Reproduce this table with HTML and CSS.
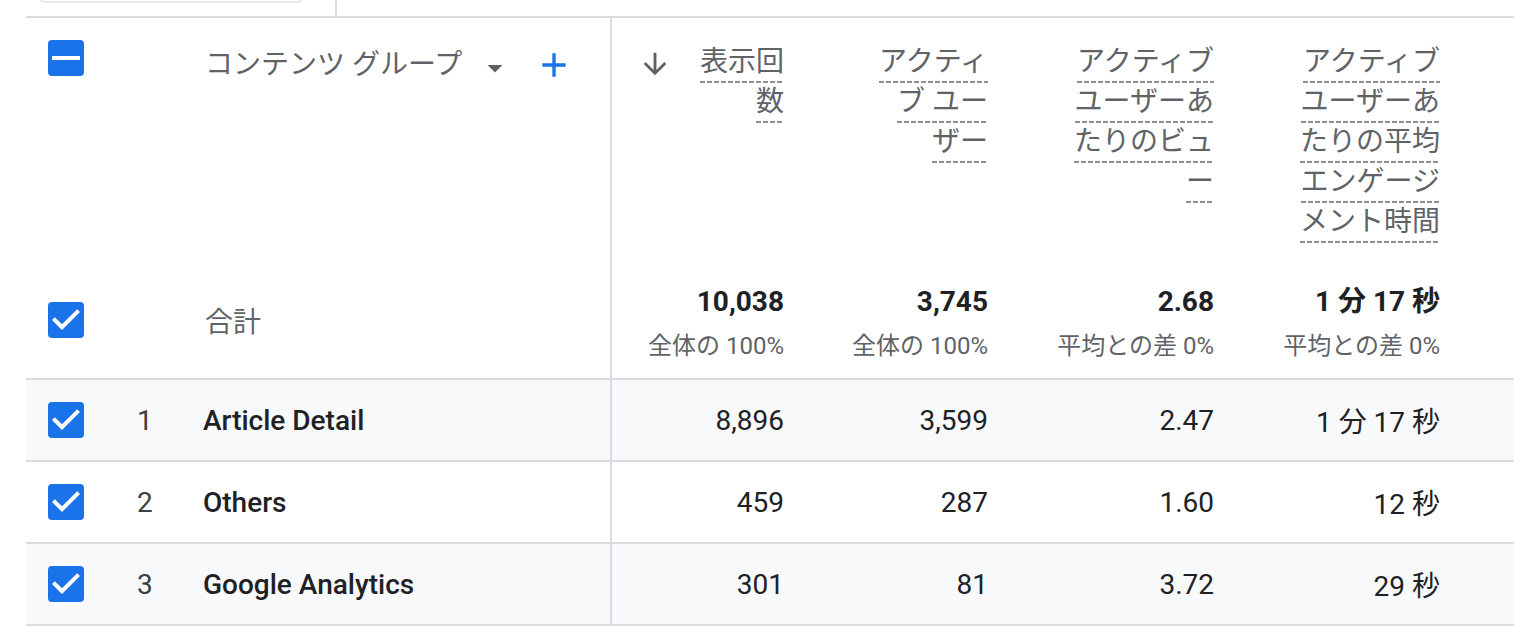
FILE: index.html
```html
<!DOCTYPE html>
<html lang="ja">
<head>
<meta charset="utf-8">
<title>コンテンツ グループ</title>
<link rel="stylesheet" href="styles.css">
</head>
<body>
<div class="topbar">
  <div class="search"></div>
  <div class="tsep"></div>
</div>
<div class="tbl">
  <div class="row head">
    <div class="c lc">
      <svg class="cb" viewBox="0 0 36 36" width="36" height="36"><rect width="36" height="36" rx="4" fill="#1a73e8"/><rect x="4" y="16" width="28" height="4" fill="#fff"/></svg>
      <div class="dim">
        <span class="dimlabel">コンテンツ グループ</span>
        <svg class="drop" viewBox="0 0 24 24" width="36" height="36"><path d="M7 10l5 5 5-5z" fill="#5f6368"/></svg>
        <svg class="plus" viewBox="0 0 24 24" width="40" height="40"><path d="M19 13h-6v6h-2v-6H5v-2h6V5h2v6h6v2z" fill="#1a73e8"/></svg>
      </div>
    </div>
    <div class="c mh">
      <svg class="sort" viewBox="0 0 24 24" width="34" height="34"><path d="M20 12l-1.41-1.41L13 16.17V4h-2v12.17l-5.58-5.59L4 12l8 8 8-8z" fill="#5f6368"/></svg>
      <div class="hls">
        <div class="hl"><span>表示回</span></div>
        <div class="hl"><span>数</span></div>
      </div>
    </div>
    <div class="c mh">
      <div class="hls">
        <div class="hl"><span>アクティ</span></div>
        <div class="hl"><span>ブ ユー</span></div>
        <div class="hl"><span>ザー</span></div>
      </div>
    </div>
    <div class="c mh">
      <div class="hls">
        <div class="hl"><span>アクティブ</span></div>
        <div class="hl"><span>ユーザーあ</span></div>
        <div class="hl"><span>たりのビュ</span></div>
        <div class="hl"><span>ー</span></div>
      </div>
    </div>
    <div class="c mh">
      <div class="hls">
        <div class="hl"><span>アクティブ</span></div>
        <div class="hl"><span>ユーザーあ</span></div>
        <div class="hl"><span>たりの平均</span></div>
        <div class="hl"><span>エンゲージ</span></div>
        <div class="hl"><span>メント時間</span></div>
      </div>
    </div>
    <div class="c"></div>
  </div>

  <div class="row totals">
    <div class="c lc">
      <svg class="cb" viewBox="0 0 36 36" width="36" height="36"><rect width="36" height="36" rx="4" fill="#1a73e8"/><path d="M10 17l-5-5 1.41-1.41L10 14.17l7.59-7.59L19 8l-9 9z" fill="#fff" transform="translate(-6 -6) scale(2)"/></svg>
      <span class="totlabel">合計</span>
    </div>
    <div class="c mt"><span class="tv">10,038</span><span class="ts">全体の 100%</span></div>
    <div class="c mt"><span class="tv">3,745</span><span class="ts">全体の 100%</span></div>
    <div class="c mt"><span class="tv">2.68</span><span class="ts">平均との差 0%</span></div>
    <div class="c mt"><span class="tv">1 分 17 秒</span><span class="ts">平均との差 0%</span></div>
    <div class="c"></div>
  </div>

  <div class="row data alt">
    <div class="c lc">
      <svg class="cb" viewBox="0 0 36 36" width="36" height="36"><rect width="36" height="36" rx="4" fill="#1a73e8"/><path d="M10 17l-5-5 1.41-1.41L10 14.17l7.59-7.59L19 8l-9 9z" fill="#fff" transform="translate(-6 -6) scale(2)"/></svg>
      <span class="num">1</span>
      <span class="name">Article Detail</span>
    </div>
    <div class="c mv">8,896</div>
    <div class="c mv">3,599</div>
    <div class="c mv">2.47</div>
    <div class="c mv">1 分 17 秒</div>
    <div class="c"></div>
  </div>

  <div class="row data">
    <div class="c lc">
      <svg class="cb" viewBox="0 0 36 36" width="36" height="36"><rect width="36" height="36" rx="4" fill="#1a73e8"/><path d="M10 17l-5-5 1.41-1.41L10 14.17l7.59-7.59L19 8l-9 9z" fill="#fff" transform="translate(-6 -6) scale(2)"/></svg>
      <span class="num">2</span>
      <span class="name">Others</span>
    </div>
    <div class="c mv">459</div>
    <div class="c mv">287</div>
    <div class="c mv">1.60</div>
    <div class="c mv">12 秒</div>
    <div class="c"></div>
  </div>

  <div class="row data alt">
    <div class="c lc">
      <svg class="cb" viewBox="0 0 36 36" width="36" height="36"><rect width="36" height="36" rx="4" fill="#1a73e8"/><path d="M10 17l-5-5 1.41-1.41L10 14.17l7.59-7.59L19 8l-9 9z" fill="#fff" transform="translate(-6 -6) scale(2)"/></svg>
      <span class="num">3</span>
      <span class="name">Google Analytics</span>
    </div>
    <div class="c mv">301</div>
    <div class="c mv">81</div>
    <div class="c mv">3.72</div>
    <div class="c mv">29 秒</div>
    <div class="c"></div>
  </div>
</div>
</body>
</html>
```

FILE: styles.css
```css
html, body {
  margin: 0;
  padding: 0;
  background: #fff;
}
body {
  overflow: hidden;
  font-family: Roboto, "Noto Sans CJK JP", sans-serif;
  font-size: 28px;
  color: #202124;
}

.topbar {
  display: flex;
  height: 16px;
}
.search {
  margin-left: 40px;
  width: 258px;
  height: 2px;
  margin-top: -1px;
  border: 2px solid #e8eaed;
  border-top: 0;
  border-radius: 0 0 8px 8px;
}
.tsep {
  margin-left: 33px;
  width: 2px;
  height: 16px;
  background: #dadce0;
}

.tbl {
  margin-left: 26px;
  border-top: 2px solid #dadce0;
}

.row {
  display: grid;
  grid-template-columns: 586px 196px 204px 226px 226px 1fr;
}
.c {
  min-width: 0;
}
.lc {
  border-right: 2px solid #dadce0;
  padding-left: 22px;
  display: flex;
}

/* header */
.head {
  height: 244px;
}
.head .lc {
  align-items: flex-start;
  padding-top: 22px;
}
.cb {
  display: block;
  flex: none;
}
.dim {
  display: flex;
  align-items: center;
  height: 40px;
  margin-top: 5px;
  margin-left: 121px;
  color: #5f6368;
  line-height: 40px;
  white-space: nowrap;
}
.drop {
  margin-left: 15px;
  margin-top: 6px;
}
.plus {
  margin-left: 21px;
}
.mh {
  display: flex;
  justify-content: flex-end;
  align-items: flex-start;
  padding: 25px 24px 0 0;
}
.sort {
  flex: none;
  margin-top: 4px;
  margin-right: 28px;
}
.hls {
  display: flex;
  flex-direction: column;
  align-items: flex-end;
  color: #5f6368;
}
.hl {
  display: flex;
  justify-content: flex-end;
  height: 40px;
}
.hl span {
  line-height: 38px;
  padding-bottom: 2px;
  white-space: nowrap;
  background: linear-gradient(90deg, #8d9094 5px, transparent 5px) 0 100% / 7px 2px repeat-x;
}

/* totals */
.totals {
  height: 116px;
  border-bottom: 2px solid #dadce0;
}
.totals .lc {
  align-items: center;
}
.totlabel {
  margin-left: 121px;
  color: #5f6368;
}
.mt {
  display: flex;
  flex-direction: column;
  align-items: flex-end;
  padding: 22px 24px 0 0;
  white-space: nowrap;
}
.tv {
  font-weight: 700;
  line-height: 36px;
  color: #202124;
}
.ts {
  margin-top: 10px;
  font-size: 24px;
  line-height: 32px;
  color: #5f6368;
}

/* data rows */
.data {
  height: 80px;
  border-bottom: 2px solid #dadce0;
}
.data.alt {
  background: #f8f9fa;
}
.data .lc {
  align-items: center;
}
.num {
  width: 66px;
  margin-left: 53px;
  color: #3c4043;
}
.name {
  font-weight: 500;
  color: #202124;
  white-space: nowrap;
}
.mv {
  display: flex;
  align-items: center;
  justify-content: flex-end;
  padding-right: 24px;
  white-space: nowrap;
}
```
